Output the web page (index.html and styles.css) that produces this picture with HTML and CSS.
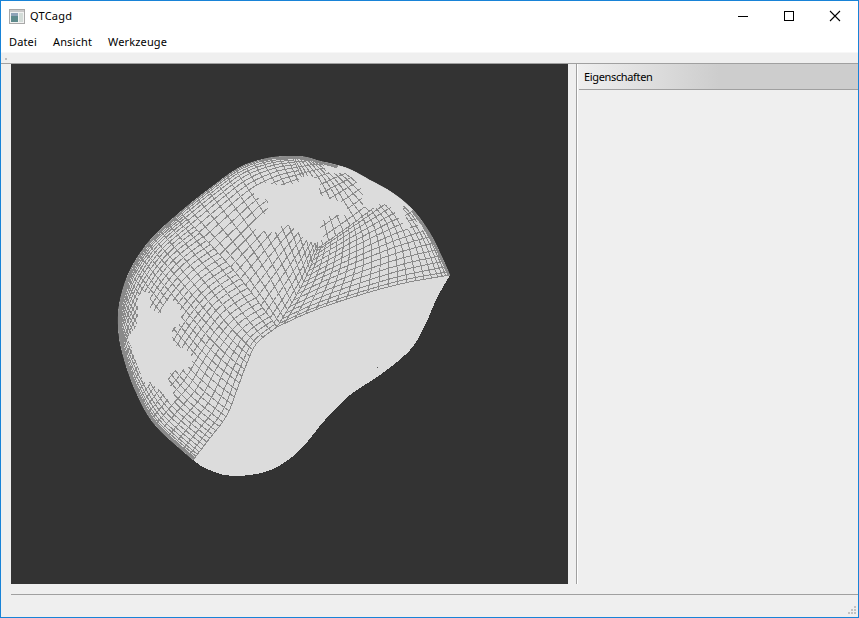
FILE: index.html
```html
<!DOCTYPE html>
<html lang="de">
<head>
    <meta charset="UTF-8">
    <title>QTCagd</title>
    <link rel="stylesheet" href="styles.css">
</head>
<body>
    <div class="window">
        <div class="titlebar">
            <svg class="appicon" width="16" height="15" viewBox="0 0 16 15">
                <rect x="0.5" y="0.5" width="15" height="14" fill="#f2f2f2" stroke="#a8a8a8"/>
                <rect x="1" y="1" width="14" height="2" fill="#c9c9c9"/>
                <rect x="2" y="4" width="7" height="9" fill="#5d8a8c"/>
                <rect x="2" y="4" width="7" height="3" fill="#8fa3b8"/>
                <rect x="10" y="4" width="4" height="9" fill="#d3dcd8"/>
            </svg>
            <span class="apptitle">QTCagd</span>
            <div class="controls">
                <svg class="control" width="46" height="30" viewBox="0 0 46 30">
                    <path d="M18 15.5h10" stroke="#000" fill="none"/>
                </svg>
                <svg class="control" width="46" height="30" viewBox="0 0 46 30">
                    <rect x="18.5" y="10.5" width="9" height="9" stroke="#000" fill="none"/>
                </svg>
                <svg class="control" width="46" height="30" viewBox="0 0 46 30">
                    <path d="M18 10l10 10M28 10l-10 10" stroke="#000" stroke-width="1.1" fill="none"/>
                </svg>
            </div>
        </div>
        <div class="menubar">
            <span>Datei</span>
            <span>Ansicht</span>
            <span>Werkzeuge</span>
        </div>
        <div class="toolbar">
            <svg width="4" height="3" viewBox="0 0 4 3"><rect width="2" height="2" fill="#bdbdbd"/></svg>
        </div>
        <div class="main">
            <div class="viewport">
                <svg id="model" width="557" height="520" viewBox="11 64 557 520"></svg>
            </div>
            <div class="dock">
                <div class="dockheader">Eigenschaften</div>
            </div>
        </div>
        <div class="statusbar">
            <svg class="grip" width="10" height="10" viewBox="0 0 10 10">
                <path d="M6 0h2v2h-2zM3 3h2v2h-2zM6 3h2v2h-2zM0 6h2v2h-2zM3 6h2v2h-2zM6 6h2v2h-2z" fill="#c2c2c2"/>
            </svg>
        </div>
    </div>
    <script src="mesh.js"></script>
</body>
</html>
```
FILE: styles.css
```css
* {
    box-sizing: border-box;
}
html, body {
    margin: 0;
    height: 100%;
    overflow: hidden;
}
body {
    font-family: "Noto Sans", "Open Sans", sans-serif;
    font-size: 11px;
    color: #000;
}
.window {
    width: 859px;
    height: 618px;
    display: flex;
    flex-direction: column;
    border: 1px solid #1883d7;
    background-color: #efefef;
}
.titlebar {
    height: 30px;
    display: flex;
    align-items: center;
    padding-left: 8px;
    background-color: #fff;
}
.appicon {
    margin-right: 5px;
}
.apptitle {
    letter-spacing: 0.25px;
    padding-bottom: 2px;
}
.controls {
    display: flex;
    margin-left: auto;
}
.control {
    display: block;
}
.menubar {
    height: 21px;
    display: flex;
    align-items: center;
    gap: 16px;
    padding-left: 8px;
    padding-bottom: 1px;
    background-color: #fff;
    letter-spacing: 0.15px;
}
.toolbar {
    height: 12px;
    padding: 5px 0 0 4px;
    border-top: 1px solid #f7f7f7;
    border-bottom: 1px solid #a0a0a0;
    background-color: #efefef;
}
.toolbar svg {
    display: block;
}
.main {
    height: 520px;
    display: flex;
    padding-left: 10px;
}
.viewport {
    width: 557px;
    background-color: #333;
}
.viewport svg {
    display: block;
}
.dock {
    flex: 1;
    margin-left: 8px;
    border-left: 1px solid #a0a0a0;
    padding-left: 2px;
    box-shadow: inset 1px 0 0 #fff;
}
.dockheader {
    height: 26px;
    padding: 5px 0 0 5px;
    border-bottom: 1px solid #a0a0a0;
    background: linear-gradient(to right, #efefef 0%, #cdcdcd 50%, #cdcdcd 100%);
    letter-spacing: -0.35px;
}
.statusbar {
    flex: 1;
    margin: 10px 0 0 10px;
    display: flex;
    justify-content: flex-end;
    align-items: flex-end;
    padding: 0 0 1px 0;
    border-top: 1px solid #a0a0a0;
}
.grip {
    display: block;
}
```
FILE: mesh.js
```js
// draws the graded quad mesh of the surface into #model
var NS = 'http://www.w3.org/2000/svg';
var svg = document.getElementById('model');

var LIGHT = '#dcdcdc';
var WIRE = '#8a8a8a';

var C = [277, 327], TIP = [450, 275], A = [320, 161], B = [318, 248], R = [393, 193], T = [292, 156];
var D = [180, 212], H = [118, 325], I = [193, 460];

var rimRight = [TIP, [442, 257], [430, 233], [413, 210], R];
var rimUpper = [R, [370, 180], [347, 168], A];
var rimTop = [D, [210, 188], [240, 167], [268, 158], T];
var rimTip = [T, [306, 157], A];
var rimLeft = [D, [150, 240], [130, 270], [120, 300], H];
var rimLow = [I, [155, 425], [135, 390], [122, 352], H];
var rimBottom = [I, [205, 468], [225, 475], [250, 475], [275, 468], [300, 450], [325, 420], [350, 395],
    [380, 375], [410, 350], [425, 325], [437, 298], TIP];

var edgeCT = [C, [310, 312], [350, 298], [400, 284], TIP];
var edgeCI = [C, [257, 343], [247, 363], [238, 387], [227, 415], [210, 438], I];

var seamB = [C, [302, 285], B];
var seamD = [C, [235, 272], D];
var seamBR = [B, [355, 222], R];
var seamBT = [B, [310, 200], T];

var patches = [
    { b: edgeCT, r: rimRight, t: seamBR, l: seamB, nu: 22, nv: 15, pu: 1.7, pv: 1.0 },
    { b: seamBR, r: rimUpper, t: rimTip, l: seamBT, nu: 14, nv: 12, pu: 1.3, pv: 1.3 },
    { b: seamB, r: seamBT, t: rimTop, l: seamD, nu: 13, nv: 24, pu: 1.0, pv: 1.45 },
    { b: edgeCI, r: rimLow, t: rimLeft, l: seamD, nu: 30, nv: 34, pu: 1.8, pv: 1.5 }
];

var topHole = [[255, 187], [265, 183], [277, 185], [297, 183], [300, 178], [310, 176], [320, 183], [318, 192],
    [327, 198], [340, 202], [350, 213], [337, 215], [327, 217], [320, 225], [323, 237], [315, 243], [303, 238],
    [295, 228], [282, 225], [275, 232], [260, 230], [252, 228], [255, 220], [267, 212], [267, 200], [255, 197]];

var leftHole = [[138, 297], [147, 292], [150, 297], [150, 307], [160, 313], [165, 303], [172, 300], [180, 308],
    [180, 323], [172, 330], [175, 345], [187, 350], [192, 363], [182, 370], [173, 370], [168, 378], [173, 393],
    [173, 403], [160, 390], [150, 382], [147, 387], [138, 367], [132, 348], [128, 338], [135, 328], [138, 317]];

// light band under the upper right rim, with the thin wedge of wires left in it
var rightLight = [[327, 172], [347, 173], [357, 183], [363, 192], [362, 200], [365, 207], [378, 208], [380, 204],
    [390, 207], [400, 220], [410, 230], [403, 209], [404, 206], [410, 212], [415, 218], [421, 230], [424, 222],
    [412, 203], [380, 175], [345, 158], [325, 158]];

function el(name, attrs, parent) {
    var e = document.createElementNS(NS, name);
    for (var k in attrs) e.setAttribute(k, attrs[k]);
    (parent || svg).appendChild(e);
    return e;
}

// catmull-rom through an open list of points
function curve(pts, t) {
    var n = pts.length - 1;
    var s = Math.min(t * n, n - 1e-6);
    var i = Math.floor(s), f = s - i;
    var p0 = pts[Math.max(i - 1, 0)], p1 = pts[i], p2 = pts[i + 1], p3 = pts[Math.min(i + 2, n)];
    return [0, 1].map(function (k) {
        return 0.5 * (2 * p1[k] + (p2[k] - p0[k]) * f +
            (2 * p0[k] - 5 * p1[k] + 4 * p2[k] - p3[k]) * f * f +
            (3 * p1[k] - p0[k] - 3 * p2[k] + p3[k]) * f * f * f);
    });
}

function coons(p, u, v) {
    var b = curve(p.b, u), t = curve(p.t, u), l = curve(p.l, v), r = curve(p.r, v);
    var c00 = p.b[0], c10 = p.b[p.b.length - 1], c01 = p.t[0], c11 = p.t[p.t.length - 1];
    return [0, 1].map(function (k) {
        return (1 - v) * b[k] + v * t[k] + (1 - u) * l[k] + u * r[k] -
            ((1 - u) * (1 - v) * c00[k] + u * (1 - v) * c10[k] + (1 - u) * v * c01[k] + u * v * c11[k]);
    });
}

function grade(t, p) {
    return 1 - Math.pow(1 - t, p);
}

function fmt(q) {
    return q[0].toFixed(1) + ' ' + q[1].toFixed(1);
}

// several open curves joined end to end, so the corners stay sharp
function sharpPath(segments) {
    var d = '';
    segments.forEach(function (seg, s) {
        var steps = seg.length * 8;
        for (var i = 0; i <= steps; i++) {
            d += (i || s ? 'L' : 'M') + fmt(curve(seg, i / steps));
        }
    });
    return d + 'Z';
}

function roundPath(pts) {
    var n = pts.length;
    var d = '';
    for (var i = 0; i < n; i++) {
        var seg = [pts[(i + n - 1) % n], pts[i], pts[(i + 1) % n], pts[(i + 2) % n]];
        for (var j = 0; j < 6; j++) {
            d += (i || j ? 'L' : 'M') + fmt(curve(seg, (1 + j / 6) / 3));
        }
    }
    return d + 'Z';
}

function line(fn) {
    var d = '';
    for (var j = 0; j <= 40; j++) {
        d += (j ? 'L' : 'M') + fmt(fn(j / 40));
    }
    return d;
}

function meshPath(p) {
    var d = '';
    var i;
    for (i = 0; i <= p.nu; i++) {
        var u = grade(i / p.nu, p.pu);
        d += line(function (s) { return coons(p, u, s); });
    }
    for (i = 0; i <= p.nv; i++) {
        var v = grade(i / p.nv, p.pv);
        d += line(function (s) { return coons(p, s, v); });
    }
    return d;
}

function rev(list) {
    return list.slice().reverse();
}

// whole rim from the tip round to the lower corner, as one smooth curve
var rim = rimRight.concat(rimUpper.slice(1), rev(rimTip).slice(1), rev(rimTop).slice(1),
    rimLeft.slice(1), rev(rimLow).slice(1));

var outlineD = sharpPath([rimBottom, rim]);
var bigD = sharpPath([rimBottom, rev(edgeCT), edgeCI]);

var defs = el('defs', {});
var clip = el('clipPath', { id: 'shape' }, defs);
el('path', { d: outlineD }, clip);

el('path', { d: outlineD, fill: LIGHT, 'shape-rendering': 'crispEdges' });

var group = el('g', { 'clip-path': 'url(#shape)', 'shape-rendering': 'crispEdges' });
patches.forEach(function (p) {
    el('path', { d: meshPath(p), fill: 'none', stroke: WIRE, 'stroke-width': 1 }, group);
});

[topHole, leftHole, rightLight].forEach(function (pts) {
    el('path', { d: roundPath(pts), fill: LIGHT }, group);
});
el('path', { d: bigD, fill: LIGHT }, group);

// the two edges of the plain face, then the dense rim where the wires run together
[
    { pts: edgeCT, w: 1 },
    { pts: edgeCI, w: 1 },
    { pts: [[262, 157], [282, 155], [308, 157], [338, 165]], w: 7 },
    { pts: [[413, 210], [430, 233], [442, 257], [450, 275]], w: 5 },
    { pts: [[126, 283], [119, 305], [118, 325], [120, 345]], w: 6 },
    { pts: [[122, 352], [135, 390], [155, 425], [193, 460]], w: 6 }
].forEach(function (b) {
    var d = line(function (s) { return curve(b.pts, s); });
    el('path', { d: d, fill: 'none', stroke: WIRE, 'stroke-width': b.w }, group);
});

el('rect', { x: 377, y: 367, width: 1, height: 1, fill: '#555' });
```
